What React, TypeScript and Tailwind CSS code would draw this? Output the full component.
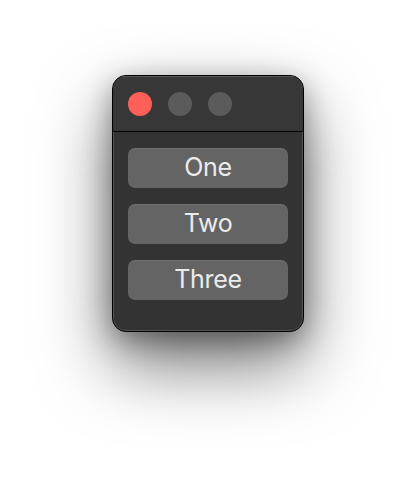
const labels = ["One", "Two", "Three"];

export default function App() {
	return (
		<div className="min-h-screen bg-white pt-[75px] font-['Inter','Liberation_Sans',Arial,sans-serif]">
			<div className="mx-auto flex h-[257px] w-[192px] flex-col overflow-hidden rounded-[14px] border border-black bg-[#333333] shadow-[inset_0_0_0_1px_rgba(255,255,255,0.16),0_32px_70px_rgba(0,0,0,0.55),0_8px_28px_rgba(0,0,0,0.35)]">
				<div className="flex h-[56px] shrink-0 items-center gap-4 border-b border-black bg-[#373737] pl-[15px] shadow-[inset_0_1px_0_rgba(255,255,255,0.16)]">
					<span className="h-6 w-6 rounded-full bg-[#ff5f57]" />
					<span className="h-6 w-6 rounded-full bg-[#5b5b5b]" />
					<span className="h-6 w-6 rounded-full bg-[#5b5b5b]" />
				</div>
				<div className="flex flex-col gap-4 px-[15px] pt-4">
					{labels.map((label) => (
						<button
							key={label}
							type="button"
							className="flex h-10 w-40 items-center justify-center rounded-[7px] bg-[#646464] pb-[2px] text-[25px] leading-none tracking-[-0.3px] text-[#ebebeb] shadow-[inset_0_1px_0_rgba(255,255,255,0.08)]"
						>
							{label}
						</button>
					))}
				</div>
			</div>
		</div>
	);
}
